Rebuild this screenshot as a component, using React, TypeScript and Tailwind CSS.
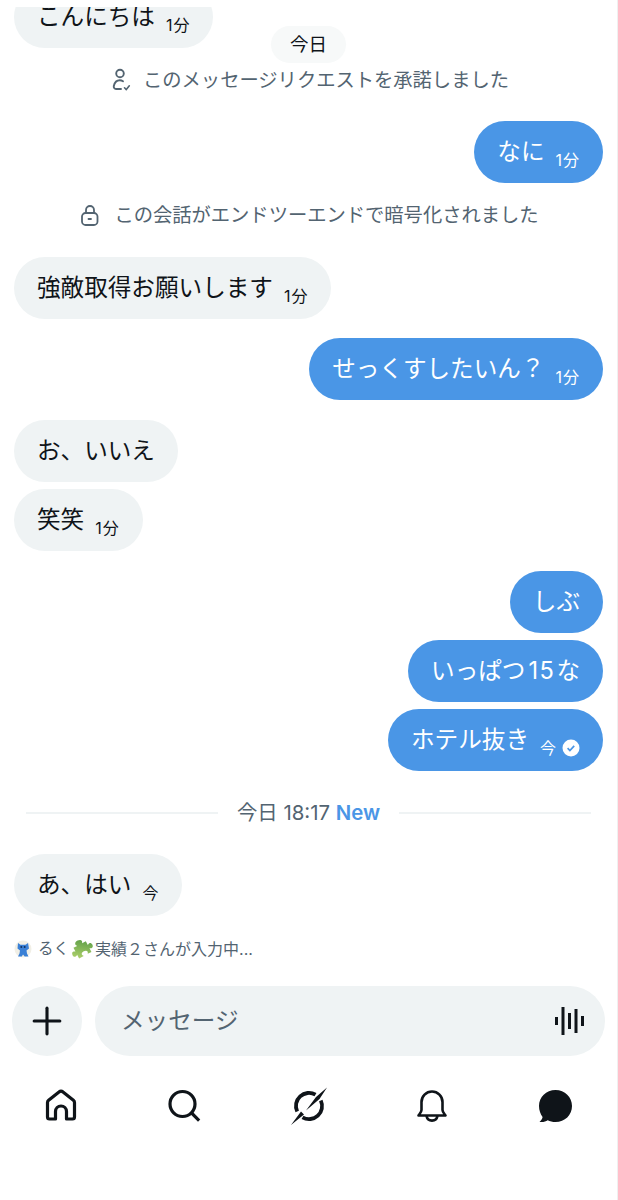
import { Plus } from 'lucide-react';

const jpFont = "font-['Inter','Noto_Sans_CJK_JP',sans-serif]";

function Bubble({ text, time, mine, check, className }: { text: React.ReactNode; time?: string; mine?: boolean; check?: boolean; className?: string }) {
  return (
    <div className={`flex ${mine ? 'justify-end pr-[14px]' : 'justify-start pl-[14px]'} ${className ?? ''}`}>
      <div className={`flex h-[62px] items-center rounded-[31px] px-[23px] ${mine ? 'bg-[#4a96e6] text-white' : 'bg-[#eff3f4] text-[#0f1419]'}`}>
        <span className="-mt-[1px] text-[23.6px] leading-[30px]">{text}</span>
        {time && <span className="ml-[11px] mt-[15px] text-[16px] leading-[20px] tracking-[1px]">{time}</span>}
        {check && <CheckDot />}
      </div>
    </div>
  );
}

function CheckDot() {
  return (
    <svg width="18" height="18" viewBox="0 0 18 18" className="ml-[5px] mt-[15px]">
      <circle cx="9" cy="9" r="8.5" fill="#fff" />
      <path d="M5.6 9.2l2.3 2.3 4.3-4.6" fill="none" stroke="#4a96e6" strokeWidth="1.7" />
    </svg>
  );
}

function SystemNote({ icon, text, className }: { icon: React.ReactNode; text: string; className?: string }) {
  return (
    <div className={`flex items-center justify-center text-[19.3px] leading-[26px] text-[#536471] ${className ?? ''}`}>
      {icon}
      <span>{text}</span>
    </div>
  );
}

export default function App() {
  return (
    <div className={`relative flex h-[1200px] w-[618px] flex-col overflow-hidden border-r border-[#f0f0f0] bg-white ${jpFont}`}>
      <div className="mt-[7px] h-[41px] overflow-hidden">
        <Bubble text="こんにちは" time="1分" className="-mt-[21px]" />
      </div>
      <div className="-mt-[22px] flex justify-center">
        <div className="flex h-[37px] w-[75px] items-center justify-center rounded-full bg-[#f7f9f9] text-[18.5px] text-[#0f1419]">今日</div>
      </div>
      <SystemNote
        className="mt-[4px]"
        text="このメッセージリクエストを承諾しました"
        icon={
          <svg width="26" height="26" viewBox="0 0 26 26" fill="none" stroke="#536471" strokeWidth="1.900" strokeLinecap="round" strokeLinejoin="round" className="mr-[9px]">
            <circle cx="12" cy="6.500" r="3.800" />
            <path d="M15 14.200c-1-.6-2-.9-3.200-.9-3.200 0-5.200 2.300-6 5.700-.3 1.500.6 3 2.200 3h5" />
            <path d="M16.500 20.800l1.800 1.800 3-3.800" strokeWidth="1.600" />
          </svg>
        }
      />
      <Bubble mine text="なに" time="1分" className="mt-[28px]" />
      <SystemNote
        className="mt-[19px]"
        text="この会話がエンドツーエンドで暗号化されました"
        icon={
          <svg width="24" height="24" viewBox="0 0 24 24" fill="none" stroke="#536471" strokeWidth="1.800" strokeLinecap="round" strokeLinejoin="round" className="mr-[12px]">
            <path d="M8 10V7a4 4 0 0 1 8 0v3" />
            <rect x="4" y="10" width="15.500" height="12" rx="3.600" />
            <path d="M10.500 16h2.500" />
          </svg>
        }
      />
      <Bubble text="強敵取得お願いします" time="1分" className="mt-[29px]" />
      <Bubble mine text="せっくすしたいん？" time="1分" className="mt-[19px]" />
      <Bubble text="お、いいえ" className="mt-[20px]" />
      <Bubble text="笑笑" time="1分" className="mt-[7px]" />
      <Bubble mine text="しぶ" className="mt-[20px]" />
      <Bubble
        mine
        text={
          <>
            いっぱつ<span className="ml-[3px] mr-[1px] tracking-[1.5px]">15</span>な
          </>
        }
        className="mt-[7px]"
      />
      <Bubble mine text="ホテル抜き" time="今" check className="mt-[7px]" />

      <div className="mt-[29px] flex items-center px-[26px]">
        <div className="h-[2px] flex-1 bg-[#eff3f4]" />
        <div className="mx-[19px] text-[20.400px] leading-[26px] text-[#536471]">
          今日 18:17 <span className="font-semibold text-[#4a96e6]">New</span>
        </div>
        <div className="h-[2px] flex-1 bg-[#eff3f4]" />
      </div>

      <Bubble text="あ、はい" time="今" className="mt-[28px]" />

      <div className="mt-[21px] flex items-center pl-[14px] text-[15.500px] leading-[24px] text-[#536471]">
        <svg width="18" height="20" viewBox="0 0 18 20" className="mr-[6px]">
          <circle cx="9" cy="10" r="8.500" fill="#f1efe6" />
          <path d="M4 4l2.500 1.800h5L14 4l1 5.500-2.500 2 .5 3 1.500 3h-3.800L9 15.500 7.800 17.500H4l1.500-3 .5-3-2.500-2z" fill="#3a80d6" />
          <circle cx="7.300" cy="8" r="1" fill="#12305c" />
          <circle cx="10.700" cy="8" r="1" fill="#12305c" />
        </svg>
        <span>るく</span>
        <svg width="24" height="24" viewBox="0 0 24 24" className="mx-[1px]">
          <defs>
            <linearGradient id="puzzle" x1="0" y1="1" x2="1" y2="0">
              <stop offset="0" stopColor="#b7d66f" />
              <stop offset="1" stopColor="#4d9440" />
            </linearGradient>
          </defs>
          <path
            transform="rotate(-28 12 12)"
            d="M5 7h4.200c-.6-1-.9-1.500-.9-2.200C8.300 3.300 10 2.500 12 2.500s3.700.8 3.700 2.300c0 .7-.3 1.200-.9 2.200H19v4.200c1-.6 1.500-.9 2.200-.9 1.300 0 2 1.300 2 2.700s-.7 2.700-2 2.700c-.7 0-1.200-.3-2.200-.9V19h-4.200c.6-1 .9-1.500.9-2.200 0-1.300-1.500-2-3.200-2s-3.200.7-3.200 2c0 .7.300 1.200.9 2.200H5v-4.200c-1 .6-1.500.9-2.200.9-1.300 0-2-1.300-2-2.700s.7-2.700 2-2.700c.7 0 1.200.3 2.200.9z"
            fill="url(#puzzle)"
          />
        </svg>
        <span className="text-[16px]">実績２さんが入力中...</span>
      </div>

      <div className="mt-[25px] flex items-center gap-[13px] pl-[12px] pr-[12px]">
        <div className="flex h-[70px] w-[70px] items-center justify-center rounded-full bg-[#eff3f4]">
          <Plus size={44} strokeWidth={1.700} color="#0f1419" />
        </div>
        <div className="flex h-[70px] flex-1 items-center justify-between rounded-full bg-[#eff3f4] pl-[26px] pr-[20px]">
          <span className="text-[23.600px] text-[#536471]">メッセージ</span>
          <svg width="30" height="30" viewBox="0 0 30 30" fill="#0f1419">
            <rect x="0" y="11" width="3" height="8" />
            <rect x="6.500" y="1" width="3" height="28" />
            <rect x="13" y="7" width="3" height="16" />
            <rect x="19.500" y="3" width="3" height="24" />
            <rect x="26" y="10" width="3" height="10" />
          </svg>
        </div>
      </div>

      <div className="mt-[30px] flex items-center pl-[44px]">
        <svg width="34" height="34" viewBox="0 0 34 34" fill="none" stroke="#0f1419" strokeWidth="3.200" strokeLinejoin="round">
          <path d="M3.500 28V13.500a3 3 0 0 1 1.100-2.300L15 3a3 3 0 0 1 4 0l10.400 8.200a3 3 0 0 1 1.100 2.300V28a2 2 0 0 1-2 2H22.500v-7.500a5.500 5.500 0 0 0-11 0V30H5.500a2 2 0 0 1-2-2z" />
        </svg>
        <svg width="34" height="34" viewBox="0 0 34 34" fill="none" stroke="#0f1419" strokeWidth="3.200" strokeLinecap="square" className="ml-[89px]">
          <circle cx="15.500" cy="15" r="12.500" />
          <path d="M25 24.500l6 6" />
        </svg>
        <svg width="40" height="40" viewBox="0 0 40 40" fill="#0f1419" className="ml-[88px]">
          <path fill="none" stroke="#0f1419" strokeWidth="3.800" d="M26.500 8.700A13 13 0 0 0 8.200 25.500" />
          <path fill="none" stroke="#0f1419" strokeWidth="3.800" d="M31.800 14.500A13 13 0 0 1 13.500 31.300" />
          <path d="M38 1.500L30.500 13 17 24.500 27 11zM2 39l10-13.500 3 3z" />
        </svg>
        <svg width="34" height="34" viewBox="0 0 34 34" fill="none" stroke="#0f1419" strokeWidth="2.600" strokeLinejoin="round" className="ml-[86px]">
          <path d="M6.500 21V13a10.500 10.500 0 0 1 21 0v8c0 2 1.500 3.500 3 5.500h-27c1.500-2 3-3.500 3-5.500z" />
          <path d="M11.500 27c.6 3 2.800 4.600 5.500 4.600s4.900-1.600 5.500-4.600" />
        </svg>
        <svg width="36" height="36" viewBox="0 0 36 36" fill="#0f1419" className="ml-[88px]">
          <path d="M18.500 2C27.900 2 35 9 35 18s-7.100 16-16.500 16c-3 0-5.600-.7-7.800-1.800-2 1.400-5.200 2.200-8.200 1.600 1.800-1.300 2.800-3 3.100-4.800C3.500 26.200 2 22.300 2 18 2 9 9.100 2 18.500 2z" />
        </svg>
      </div>
    </div>
  );
}
